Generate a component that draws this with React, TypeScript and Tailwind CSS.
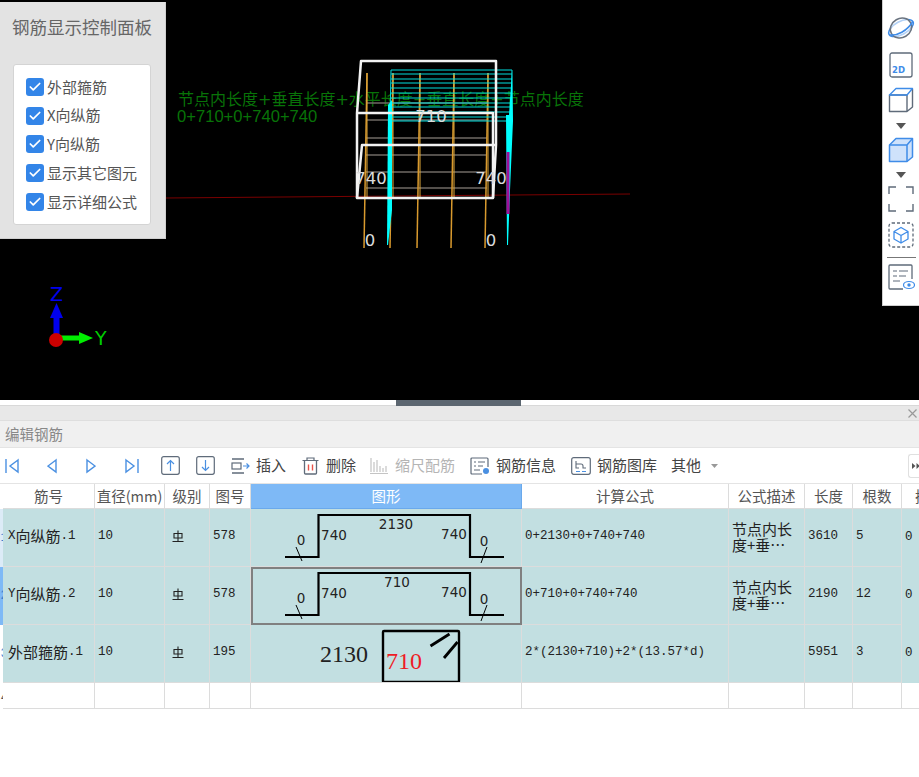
import { Check } from "lucide-react";
import type { ReactNode } from "react";

const gridCols =
  "grid grid-cols-[3px_92px_70px_45px_41px_271px_207px_76px_48px_49px_19px]";
const cellLine = "border-r border-b border-[#dcdcdc]";
const checks = ["外部箍筋", "X向纵筋", "Y向纵筋", "显示其它图元", "显示详细公式"];
const heads = ["筋号", "直径(mm)", "级别", "图号", "图形", "计算公式", "公式描述", "长度", "根数"];
const cyanY = [70, 74, 79, 83, 88, 93, 98, 103, 107, 112, 117, 121];
const grayY = [103, 120, 138, 155, 172, 188];
const orange = [
  [367, 73, 364, 248],
  [393, 73, 390, 248],
  [420, 73, 417, 248],
  [454, 73, 451, 248],
  [488, 73, 485, 248],
];

function Scene() {
  return (
    <svg width="919" height="400" className="absolute left-0 top-0">
      <g fontSize="16" fill="#087308">
        <text x="178" y="105" fontFamily="DejaVu Sans, Noto Sans CJK SC, sans-serif">节点内长度+垂直长度+水平长度+垂直长度+节点内长度</text>
        <text x="177" y="122" fontSize="16.6" fontFamily="Liberation Sans, sans-serif">0+710+0+740+740</text>
      </g>
      <line x1="166" y1="198" x2="630" y2="194" stroke="#7a0000" strokeWidth="1" />
      {grayY.map((y) => (
        <line key={y} x1="366" y1={y} x2="487" y2={y} stroke="#6f6a64" strokeWidth="1.5" />
      ))}
      {orange.map(([a, b, c, d]) => (
        <g key={a}>
          <line x1={a} y1={b} x2={c} y2={d} stroke="#d99a2e" strokeWidth="1.5" />
          <line x1={a} y1={b} x2={a} y2={197} stroke="#e2a93a" strokeWidth="1" />
        </g>
      ))}
      {cyanY.map((y) => (
        <line key={y} x1="391" y1={y} x2="512" y2={y} stroke="#00dede" strokeWidth="1" />
      ))}
      <line x1="391" y1="70" x2="390" y2="121" stroke="#00dede" />
      <line x1="512" y1="70" x2="512" y2="121" stroke="#00dede" />
      <polygon points="388,105 392,100 392,210 388,245 387,245" fill="#00ffff" />
      <polygon points="506,115 509,115 512,70 513,121 510,190 508,245 507,245" fill="#00ffff" />
      <rect x="506.5" y="152" width="3" height="62" fill="#a0109a" />
      <g fill="none" stroke="#f2f2f2" strokeWidth="2.5" strokeLinejoin="round">
        <path d="M357 113 L361 61 H496 V145 L493 198 H357 Z" />
        <path d="M357 113 H493 V198" />
        <path d="M357 198 L362 145 H496" />
      </g>
      <g fontFamily="DejaVu Sans, sans-serif" fontSize="16.5" fill="#dcdcdc" textAnchor="middle">
        <text x="431" y="122">710</text>
        <text x="371" y="184">740</text>
        <text x="491" y="184">740</text>
        <text x="370" y="246">0</text>
        <text x="491" y="246">0</text>
      </g>
      <rect x="53.5" y="316" width="6" height="24" fill="#0000ee" />
      <polygon points="56.5,303 50,318 63,318" fill="#0000ee" />
      <rect x="58" y="335.5" width="22" height="5" fill="#00ee00" />
      <polygon points="93,338 79,332 79,344" fill="#00ee00" />
      <circle cx="56" cy="340" r="7" fill="#cc0000" />
      <g fontFamily="DejaVu Sans, sans-serif" fontSize="19">
        <text x="50" y="301" fill="#0000ee">Z</text>
        <text x="95" y="345" fill="#00cc00">Y</text>
      </g>
    </svg>
  );
}

function SideIcons() {
  return (
    <div className="absolute right-0 top-0 flex h-[306px] w-[37px] flex-col items-center border-l border-b border-[#cfcfcf] bg-white pt-[14px]">
      <svg width="28" height="28" viewBox="0 0 28 28" fill="none">
        <ellipse cx="14" cy="14" rx="13.5" ry="6.5" transform="rotate(-28 14 14)" stroke="#3f8ce8" strokeWidth="1.6" />
        <ellipse cx="14" cy="14" rx="11" ry="9.5" transform="rotate(-30 14 14)" fill="#fff" fillOpacity="0.6" stroke="#6b7480" strokeWidth="1.5" />
        <path d="M3 21 C10 22 20 17 25.5 8" stroke="#3f8ce8" strokeWidth="1.6" />
      </svg>
      <svg className="mt-[10px]" width="24" height="26" viewBox="0 0 24 26" fill="none">
        <rect x="1" y="1" width="22" height="24" rx="2" stroke="#5f6b7a" strokeWidth="1.3" />
        <text x="3" y="21" fontFamily="DejaVu Sans, sans-serif" fontWeight="700" fontSize="8.5" fill="#3f8ce8">2D</text>
      </svg>
      <svg className="mt-[9px]" width="26" height="26" viewBox="0 0 26 26" fill="none" strokeWidth="1.4" strokeLinejoin="round">
        <path d="M1.5 8 V24.5 H19 V8 Z M19 24.5 L24.5 20 V2" stroke="#5f6b7a" />
        <path d="M1.5 8 L8 1.5 H24.5 L19 8 Z" stroke="#3f8ce8" />
      </svg>
      <svg className="mt-[10px]" width="10" height="6" viewBox="0 0 10 6"><path d="M0 0 H10 L5 6 Z" fill="#555" /></svg>
      <svg className="mt-[8px]" width="26" height="26" viewBox="0 0 26 26" fill="#cfe2fb" stroke="#3f8ce8" strokeWidth="1.5" strokeLinejoin="round">
        <path d="M1.5 8 L8 1.5 H24.5 V20 L19 24.5 H1.5 Z" />
        <path d="M1.5 8 H19 V24.5 M19 8 L24.5 1.5" fill="none" />
      </svg>
      <svg className="mt-[9px]" width="10" height="6" viewBox="0 0 10 6"><path d="M0 0 H10 L5 6 Z" fill="#555" /></svg>
      <svg className="mt-[8px]" width="26" height="26" viewBox="0 0 26 26" fill="none" stroke="#5f6b7a" strokeWidth="1.4">
        <path d="M1 8 V1 H8 M18 1 H25 V8 M25 18 V25 H18 M8 25 H1 V18" />
      </svg>
      <svg className="mt-[10px]" width="26" height="26" viewBox="0 0 26 26" fill="none">
        <rect x="1" y="1" width="24" height="24" rx="3" stroke="#5f6b7a" strokeWidth="1.3" strokeDasharray="3 2" />
        <path d="M13 5.5 L20 9.5 V17 L13 21 L6 17 V9.5 Z M6 9.5 L13 13.5 L20 9.5 M13 13.5 V21" stroke="#3f8ce8" strokeWidth="1.3" strokeLinejoin="round" />
      </svg>
      <div className="mt-[9px] h-px w-[29px] bg-[#777]" />
      <svg className="mt-[6px]" width="27" height="26" viewBox="0 0 27 26" fill="none">
        <path d="M15 25 H2 Q1 25 1 24 V2 Q1 1 2 1 H23 Q24 1 24 2 V15" stroke="#5f6b7a" strokeWidth="1.3" />
        <path d="M5 7 H9 M11 7 H20 M5 12 H9 M11 12 H18 M5 17 H12" stroke="#5f6b7a" strokeWidth="1.2" />
        <ellipse cx="21" cy="21" rx="5.5" ry="3.5" stroke="#3f8ce8" strokeWidth="1.2" />
        <circle cx="21" cy="21" r="1.7" fill="#3f8ce8" />
      </svg>
    </div>
  );
}

function ControlPanel() {
  return (
    <div className="absolute left-0 top-[2px] h-[237px] w-[166px] border-r border-b border-[#cfcfcf] bg-[#e3e3e3]">
      <div className="pl-[12px] pt-[13px] text-[17.5px] leading-[24px] text-[#666]">钢筋显示控制面板</div>
      <div className="ml-[13px] mt-[25px] flex h-[161px] w-[138px] flex-col gap-[10.7px] rounded-[3px] border border-[#d4d4d4] bg-white pl-[12px] pt-[13px]">
        {checks.map((c) => (
          <div key={c} className="flex h-[18px] items-center gap-[3px] text-[15px] text-[#555]">
            <span className="flex h-[18px] w-[18px] items-center justify-center rounded-[3px] bg-[#3385e8]">
              <Check size={14} color="#fff" strokeWidth={3} />
            </span>
            {c}
          </div>
        ))}
      </div>
    </div>
  );
}

function ToolBtn({ icon, label, className }: { icon: ReactNode; label: string; className: string }) {
  return (
    <div className={`flex shrink-0 items-center gap-[6px] whitespace-nowrap ${className}`}>
      {icon}
      <span>{label}</span>
    </div>
  );
}

function Toolbar() {
  const nav = "#4a90e2";
  const dark = "#5f6b7a";
  return (
    <div className="flex h-[35px] items-center bg-white pl-[5px] text-[15px] text-[#444]">
      <svg className="shrink-0" width="14" height="16" viewBox="0 0 14 16" fill="none" stroke={nav} strokeWidth="1.4"><path d="M1 1 V15 M13 2 L5 8 L13 14 Z" /></svg>
      <svg className="ml-[28px] shrink-0" width="10" height="16" viewBox="0 0 10 16" fill="none" stroke={nav} strokeWidth="1.4"><path d="M9 2 L1 8 L9 14 Z" /></svg>
      <svg className="ml-[29px] shrink-0" width="10" height="16" viewBox="0 0 10 16" fill="none" stroke={nav} strokeWidth="1.4"><path d="M1 2 L9 8 L1 14 Z" /></svg>
      <svg className="ml-[29px] shrink-0" width="14" height="16" viewBox="0 0 14 16" fill="none" stroke={nav} strokeWidth="1.4"><path d="M13 1 V15 M1 2 L9 8 L1 14 Z" /></svg>
      <svg className="ml-[22px] shrink-0" width="19" height="19" viewBox="0 0 19 19" fill="none">
        <rect x="0.7" y="0.7" width="17.6" height="17.6" rx="2" stroke={dark} strokeWidth="1.2" />
        <path d="M9.5 15 V5 M6 8 L9.5 4.5 L13 8" stroke={nav} strokeWidth="1.2" />
      </svg>
      <svg className="ml-[16px] shrink-0" width="19" height="19" viewBox="0 0 19 19" fill="none">
        <rect x="0.7" y="0.7" width="17.6" height="17.6" rx="2" stroke={dark} strokeWidth="1.2" />
        <path d="M9.5 4 V14 M6 11 L9.5 14.5 L13 11" stroke={nav} strokeWidth="1.2" />
      </svg>
      <ToolBtn
        className="ml-[16px]"
        label="插入"
        icon={
          <svg width="19" height="16" viewBox="0 0 19 16" fill="none">
            <path d="M1 1 H13 M1 15 H13" stroke={dark} strokeWidth="1.3" />
            <rect x="1" y="5" width="9" height="6" stroke={dark} strokeWidth="1.2" />
            <path d="M12 8 H18 M15.5 5.5 L18 8 L15.5 10.5" stroke={nav} strokeWidth="1.2" />
          </svg>
        }
      />
      <ToolBtn
        className="ml-[16px]"
        label="删除"
        icon={
          <svg className="mr-[1px]" width="17" height="18" viewBox="0 0 17 18" fill="none">
            <path d="M0.5 3.5 H16.5 M5 3 V1 H12 V3" stroke={dark} strokeWidth="1.2" />
            <path d="M2.5 4 V16 Q2.5 17 3.5 17 H13.5 Q14.5 17 14.5 16 V4" stroke={dark} strokeWidth="1.3" />
            <path d="M6.5 7.5 V13.5 M10.5 7.5 V13.5" stroke="#e8534a" strokeWidth="1.4" />
          </svg>
        }
      />
      <ToolBtn
        className="ml-[14px] text-[#b5b5b5]"
        label="缩尺配筋"
        icon={
          <svg className="mr-[1px]" width="18" height="18" viewBox="0 0 18 18" fill="none" stroke="#c4c4c4" strokeWidth="1.2">
            <path d="M1 1 V15 M4 5 V15 M7 3 V15 M10 9 V15 M13 11 V15 M16 9 V15 M0 16.5 H18" />
          </svg>
        }
      />
      <ToolBtn
        className="ml-[15px]"
        label="钢筋信息"
        icon={
          <svg width="20" height="18" viewBox="0 0 20 18" fill="none">
            <path d="M12 17 H2 Q1 17 1 16 V2 Q1 1 2 1 H17 Q18 1 18 2 V10" stroke={dark} strokeWidth="1.2" />
            <path d="M4 5 H6 M8 5 H15 M4 9 H6 M8 9 H13 M4 13 H10" stroke={dark} strokeWidth="1.1" />
            <circle cx="16" cy="14" r="3" fill={nav} />
          </svg>
        }
      />
      <ToolBtn
        className="ml-[15px]"
        label="钢筋图库"
        icon={
          <svg width="20" height="18" viewBox="0 0 20 18" fill="none">
            <rect x="0.7" y="0.7" width="18.6" height="16.6" rx="2" stroke={dark} strokeWidth="1.2" />
            <path d="M5 4 V11 H8 M5 7 H10 Q12 7 12 9 V11 H15" stroke={dark} strokeWidth="1.1" />
            <path d="M5 14.5 H9 M11 14.5 H15" stroke={nav} strokeWidth="1.2" />
          </svg>
        }
      />
      <span className="ml-[14px] shrink-0 whitespace-nowrap">其他</span>
      <svg className="ml-[10px] shrink-0" width="7" height="4" viewBox="0 0 7 4"><path d="M0 0 H7 L3.5 4 Z" fill="#999" /></svg>
      <div className="ml-[190px] flex h-[24px] w-[14px] shrink-0 items-center justify-center rounded-l-[3px] border border-r-0 border-[#e0e0e0]">
        <svg width="8" height="6" viewBox="0 0 8 6"><path d="M0 0 L3.5 3 L0 6 Z M4.5 0 L8 3 L4.5 6 Z" fill="#555" /></svg>
      </div>
    </div>
  );
}

function GradeMark() {
  return (
    <svg width="12" height="13" viewBox="0 0 12 13" fill="none" stroke="#222" strokeWidth="1.1">
      <path d="M2 3.5 H10 V8 H2 Z M6 0.5 V11.5 M0.5 11.5 H11.5" />
    </svg>
  );
}

function BentBar({ mid, midX }: { mid: string; midX: number }) {
  return (
    <svg width="271" height="58" viewBox="0 0 271 58" className="block">
      <path d="M34 48 H67.5 V6 H219 V48 H253" fill="none" stroke="#000" strokeWidth="2.2" />
      <path d="M45 38 L51 52 M236 38 L230 54" fill="none" stroke="#000" strokeWidth="1" />
      <g fontFamily="DejaVu Sans, sans-serif" fontSize="13.5" fill="#222" textAnchor="middle">
        <text x="50" y="36">0</text>
        <text x="83" y="31">740</text>
        <text x={midX} y="20">{mid}</text>
        <text x="203" y="30">740</text>
        <text x="233" y="37">0</text>
      </g>
    </svg>
  );
}

function HoopShape() {
  return (
    <svg width="271" height="58" viewBox="0 0 271 58" className="block">
      <text x="69" y="37" fontFamily="Liberation Serif, serif" fontSize="24" fill="#222">2130</text>
      <rect x="132" y="6" width="76" height="51" rx="1" fill="none" stroke="#000" strokeWidth="2.4" />
      <path d="M179.5 21 L198.5 9 M193 33 L206.5 17" fill="none" stroke="#000" strokeWidth="2.8" />
      <text x="135" y="44" fontFamily="Liberation Serif, serif" fontSize="24" fill="#ee1c25">710</text>
    </svg>
  );
}

type RowProps = {
  num: string;
  numBg: string;
  name: ReactNode;
  code: string;
  shape: ReactNode;
  selected?: boolean;
  formula: string;
  desc: boolean;
  len: string;
  count: string;
};

function Row(r: RowProps) {
  const cell = `flex items-center overflow-hidden pb-[2px] ${cellLine}`;
  return (
    <div className={`${gridCols} h-[58px] bg-[#c2dfe1] font-['Liberation_Mono','Noto_Sans_CJK_SC',monospace] text-[12.5px] text-[#222]`}>
      <div className={`flex items-center justify-end overflow-hidden text-[#3b7fd0] ${r.numBg}`}>
        <span className="-mr-[5px]">{r.num}</span>
      </div>
      <div className={`${cell} whitespace-nowrap pl-[5px]`}>{r.name}</div>
      <div className={`${cell} pl-[3px]`}>10</div>
      <div className={`${cell} pl-[7px]`}><GradeMark /></div>
      <div className={`${cell} pl-[3px]`}>{r.code}</div>
      <div className={`overflow-hidden border-b border-r border-[#dcdcdc] ${r.selected ? "outline-2 -outline-offset-2 outline-[#808080]" : ""}`}>{r.shape}</div>
      <div className={`${cell} pl-[3px]`}>{r.formula}</div>
      <div className={`${cell} pl-[3px] font-['Noto_Sans_CJK_SC',sans-serif] text-[15px] leading-[16px]`}>
        {r.desc && <span>节点内长<br />度+垂⋯</span>}
      </div>
      <div className={`${cell} pl-[3px]`}>{r.len}</div>
      <div className={`${cell} pl-[3px]`}>{r.count}</div>
      <div className="flex items-center pb-[2px] pl-[3px]">0</div>
    </div>
  );
}

function Cjk({ children }: { children: ReactNode }) {
  return <span className="font-['Noto_Sans_CJK_SC',sans-serif] text-[15px]">{children}</span>;
}

function Table() {
  return (
    <div className="font-['Noto_Sans_CJK_SC',sans-serif]">
      <div className={`${gridCols} h-[26px] border-t border-[#e4e4e4] bg-white text-[14.5px] text-[#555]`}>
        <div />
        {heads.map((h) => (
          <div
            key={h}
            className={`flex items-center justify-center whitespace-nowrap border-r border-b ${
              h === "图形" ? "border-[#6aa9ec] bg-[#7eb9f6] text-white" : "border-[#dcdcdc]"
            }`}
          >
            {h}
          </div>
        ))}
        <div className="flex items-center overflow-hidden whitespace-nowrap border-b border-[#dcdcdc] pl-[13px]">搭接</div>
      </div>
      <Row
        num="1"
        numBg="bg-[#dcebf7]"
        name={<>X<Cjk>向纵筋</Cjk>.1</>}
        code="578"
        shape={<BentBar mid="2130" midX={145} />}
        formula="0+2130+0+740+740"
        desc
        len="3610"
        count="5"
      />
      <Row
        num="2"
        numBg="bg-[#7eb9f6]"
        selected
        name={<>Y<Cjk>向纵筋</Cjk>.2</>}
        code="578"
        shape={<BentBar mid="710" midX={146} />}
        formula="0+710+0+740+740"
        desc
        len="2190"
        count="12"
      />
      <Row
        num="3"
        numBg="bg-white"
        name={<><Cjk>外部箍筋</Cjk>.1</>}
        code="195"
        shape={<HoopShape />}
        formula="2*(2130+710)+2*(13.57*d)"
        desc={false}
        len="5951"
        count="3"
      />
      <div className={`${gridCols} h-[26px] bg-white text-[12.5px]`}>
        <div className="flex items-center justify-end overflow-hidden text-[#555]"><span className="-mr-[5px]">4</span></div>
        {heads.map((h) => (
          <div key={h} className={cellLine} />
        ))}
        <div className="border-b border-[#dcdcdc]" />
      </div>
    </div>
  );
}

export default function App() {
  return (
    <div className="h-[777px] w-[919px] overflow-hidden bg-white font-['Noto_Sans_CJK_SC',sans-serif]">
      <div className="relative h-[400px] bg-black">
        <Scene />
        <ControlPanel />
        <SideIcons />
      </div>
      <div className="flex h-[6px] justify-start border-b border-[#d8d8d8] bg-white">
        <div className="ml-[396px] h-[6px] w-[125px] bg-[#5c6670]" />
      </div>
      <div className="flex h-[15px] items-center justify-end border-b border-[#dedede] bg-[#e8e8e8] pr-[2px]">
        <svg width="9" height="9" viewBox="0 0 9 9" fill="none" stroke="#999" strokeWidth="1.2"><path d="M0.5 0.5 L8.5 8.5 M8.5 0.5 L0.5 8.5" /></svg>
      </div>
      <div className="flex h-[27px] items-center border-b border-[#e4e4e4] bg-[#f0f0f0] pl-[5px] text-[14.5px] text-[#888]">编辑钢筋</div>
      <Toolbar />
      <Table />
    </div>
  );
}
